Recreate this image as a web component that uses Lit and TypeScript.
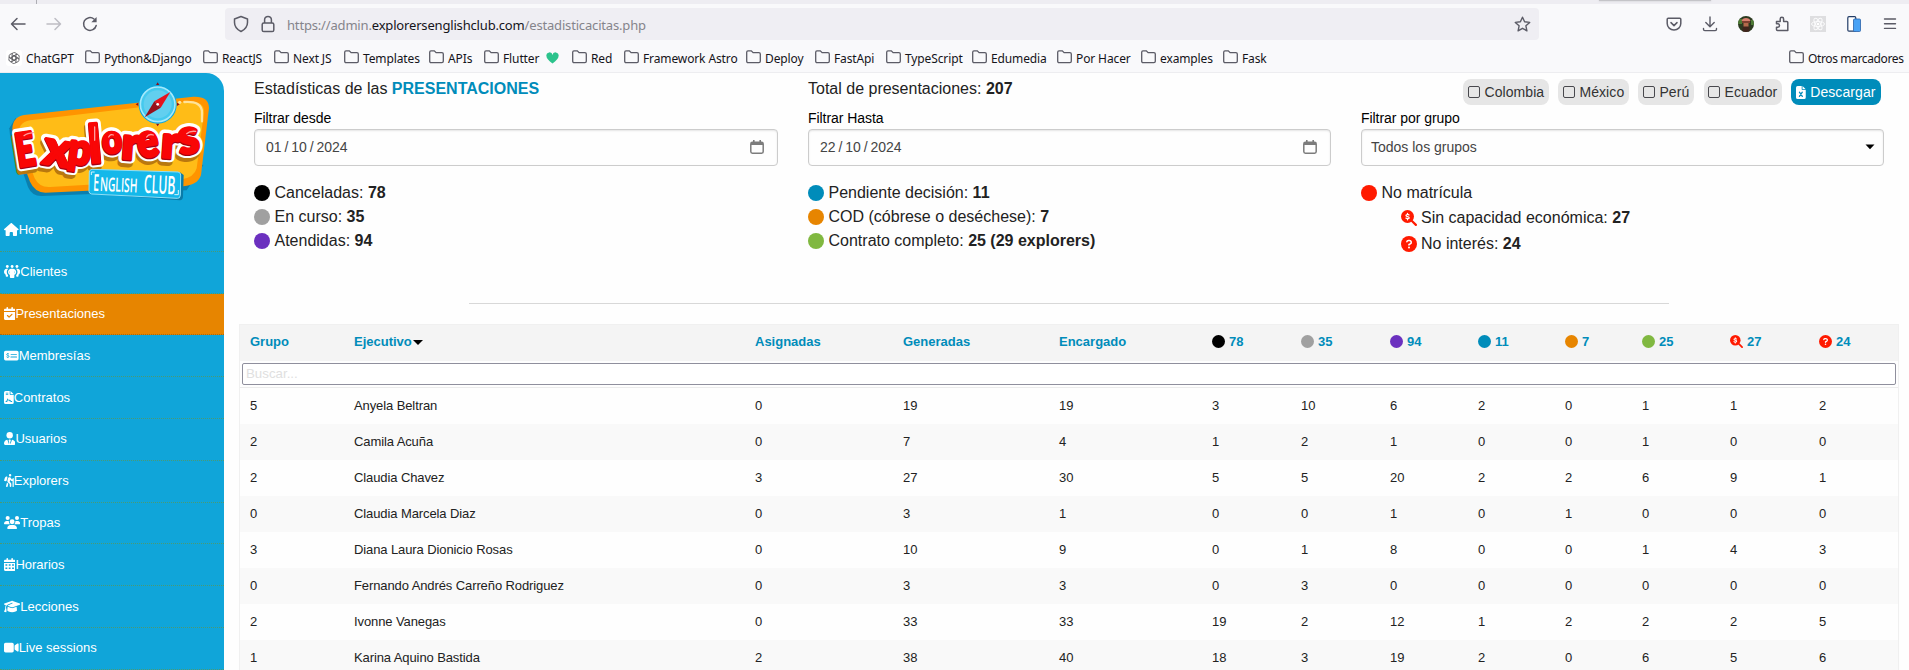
import { LitElement, html, svg, css } from "lit";
import { customElement } from "lit/decorators.js";

const P = (d: string) => svg`<path fill="currentColor" d=${d}/>`;

const ICONS: Record<string, { w: number; body: unknown }> = {
  home: { w: 576, body: P("M575.8 255.5c0 18-15 32.1-32 32.1h-32l.7 160.2c0 2.7-.2 5.4-.5 8.1V472c0 22.1-17.9 40-40 40H456c-1.1 0-2.2 0-3.3-.1c-1.4 .1-2.8 .1-4.2 .1H416 392c-22.1 0-40-17.9-40-40V448 384c0-17.7-14.3-32-32-32H256c-17.7 0-32 14.3-32 32v64 24c0 22.1-17.9 40-40 40H160 128.1c-1.5 0-3-.1-4.5-.2c-1.2 .1-2.4 .2-3.6 .2H104c-22.1 0-40-17.9-40-40V360c0-.9 0-1.9 .1-2.8V287.6H32c-18 0-32-14-32-32.1c0-9 3-17 10-24L266.4 8c7-7 15-8 22-8s15 2 21 7L564.8 231.5c8 7 12 15 11 24z") },
  clients: { w: 640, body: svg`<g fill="currentColor"><circle cx="130" cy="58" r="56"/><circle cx="320" cy="58" r="56"/><circle cx="510" cy="58" r="56"/><path d="M100 144h66c-34 34-56 78-56 130 0 46 20 90 50 120v40c0 18-12 30-28 30h-36c-16 0-28-12-28-30v-48C30 360 0 320 0 274c0-72 36-130 100-130zM540 144h-66c34 34 56 78 56 130 0 46-20 90-50 120v40c0 18 12 30 28 30h36c16 0 28-12 28-30v-48c38-26 68-66 68-112 0-72-36-130-100-130z"/><path d="M290 144h60c74 0 130 58 130 130 0 56-34 96-72 114v92c0 18-14 32-32 32H264c-18 0-32-14-32-32v-92c-38-18-72-58-72-114 0-72 56-130 130-130zM232 330v-96c-20 28-20 68 0 96zm176 0c20-28 20-68 0-96z"/></g>` },
  calcheck: { w: 448, body: P("M128 0c17.7 0 32 14.3 32 32V64H288V32c0-17.7 14.3-32 32-32s32 14.3 32 32V64h48c26.5 0 48 21.5 48 48v48H0V112C0 85.5 21.5 64 48 64H96V32c0-17.7 14.3-32 32-32zM0 192H448V464c0 26.5-21.5 48-48 48H48c-26.5 0-48-21.5-48-48V192zM329 305c9.4-9.4 9.4-24.6 0-33.9s-24.6-9.4-33.9 0l-95 95-47-47c-9.4-9.4-24.6-9.4-33.9 0s-9.4 24.6 0 33.9l64 64c9.4 9.4 24.6 9.4 33.9 0L329 305z") },
  money: { w: 576, body: svg`<path fill="currentColor" fill-rule="evenodd" d="M64 64H512a64 64 0 0 1 64 64V384a64 64 0 0 1-64 64H64a64 64 0 0 1-64-64V128a64 64 0 0 1 64-64zM272 192a16 16 0 0 0 0 32H496a16 16 0 0 0 0-32zM272 296a16 16 0 0 0 0 40H496a16 16 0 0 0 0-40z"/><path fill="none" stroke="#10a5d9" stroke-width="34" d="M196 204c-24-22-92-22-92 16 0 44 94 22 94 70 0 38-68 42-98 14M150 160v38m0 122v36"/>` },
  contract: { w: 384, body: svg`<path fill="currentColor" fill-rule="evenodd" d="M64 0H224V128a32 32 0 0 0 32 32H384V448a64 64 0 0 1-64 64H64a64 64 0 0 1-64-64V64A64 64 0 0 1 64 0zM256 0V128H384zM72 64v30h96V64zm0 64v30h96v-30zM64 430h60l34-88 42 72 30-34 34 50h56v-34h-40l-48-62-40 34-50-84-48 112H64z"/>` },
  usertie: { w: 448, body: svg`<g fill="currentColor"><circle cx="224" cy="128" r="126"/><path d="M132 304 196 480 206 420 180 324 200 292h48l20 32-26 96 10 60 64-176c76 6 132 70 132 146 0 34-26 62-60 62H60c-34 0-60-28-60-62 0-76 56-140 132-146z"/></g>` },
  hiking: { w: 384, body: P("M192 48a48 48 0 1 1 96 0 48 48 0 1 1-96 0zm51.3 182.7L224.2 307l49.7 49.7c9 9 14.1 21.2 14.1 33.9V480c0 17.7-14.3 32-32 32s-32-14.3-32-32V397.3l-73.9-73.9c-15.8-15.8-22.2-38.6-16.9-60.3l20.4-84c8.3-34.1 42.7-54.9 76.7-46.4c19 4.8 35.6 16.4 46.4 32.7L305.1 208H336V184c0-13.3 10.7-24 24-24s24 10.7 24 24v55.8V488c0 13.3-10.7 24-24 24s-24-10.7-24-24V272H296.6c-16 0-31-8-39.9-21.4l-13.3-20zM81.1 471.9L117.3 334c3 4.2 6.4 8.2 10.1 11.9l41.9 41.9L142.9 488.1c-4.5 17.1-22 27.3-39.1 22.8s-27.3-22-22.8-39.1zm55.5-346L101.4 266.5c-3 12.1-14.9 19.9-27.2 17.9l-47.9-8c-14-2.3-22.9-16.3-19.2-30L31.9 155c9.5-34.8 41.1-59 77.2-59h4.2c15.6 0 27.1 14.7 23.3 29.8z") },
  users: { w: 640, body: svg`<g fill="currentColor"><circle cx="144" cy="80" r="80"/><circle cx="512" cy="80" r="80"/><circle cx="320" cy="224" r="96"/><path d="M0 298c0-58 48-106 106-106h43c16 0 31 4 45 10a128 128 0 0 0 41 118H21c-11 0-21-10-21-22zM640 298c0-58-48-106-106-106h-43c-16 0-31 4-45 10a128 128 0 0 1-41 118h214c11 0 21-10 21-22zM128 486c0-74 60-134 133-134h118c73 0 133 60 133 134 0 14-12 26-27 26H155c-15 0-27-12-27-26z"/></g>` },
  caldays: { w: 448, body: svg`<path fill="currentColor" fill-rule="evenodd" d="M128 0c18 0 32 14 32 32V64H288V32c0-18 14-32 32-32s32 14 32 32V64h48c26 0 48 22 48 48v48H0V112C0 86 22 64 48 64H96V32c0-18 14-32 32-32zM0 192H448V464c0 26-22 48-48 48H48c-26 0-48-22-48-48zM56 244v62h74v-62zm131 0v62h74v-62zm131 0v62h74v-62zM56 376v62h74v-62zm131 0v62h74v-62zm131 0v62h74v-62z"/>` },
  cap: { w: 640, body: P("M320 32c-8.1 0-16.1 1.4-23.7 4.1L15.8 137.4C6.3 140.9 0 149.9 0 160s6.3 19.1 15.8 22.6l57.9 20.9C57.3 229.3 48 259.8 48 291.9v28.1c0 28.4-10.8 57.7-22.3 80.8c-6.5 13-13.9 25.8-22.5 37.6C0 442.7-.9 448.3 .9 453.4s6 8.9 11.2 10.2l64 16c4.2 1.1 8.7 .3 12.4-2s6.3-6.1 7.1-10.4c8.6-42.8 4.3-81.2-2.1-108.7C90.3 344.3 86 329.8 80 316.5V291.9c0-30.2 10.2-58.7 27.9-81.5c12.9-15.5 29.6-28 49.2-35.7l157-61.7c8.2-3.2 17.5 .8 20.7 9s-.8 17.5-9 20.7l-157 61.7c-12.4 4.9-23.3 12.4-32.2 21.6l159.6 57.6c7.6 2.7 15.6 4.1 23.7 4.1s16.1-1.4 23.7-4.1L624.2 182.6c9.5-3.4 15.8-12.5 15.8-22.6s-6.3-19.1-15.8-22.6L343.7 36.1C336.1 33.4 328.1 32 320 32zM128 408c0 35.3 86 72 192 72s192-36.7 192-72L496.7 262.6 354.5 314c-11.1 4-22.8 6-34.5 6s-23.5-2-34.5-6L143.3 262.6 128 408z") },
  video: { w: 576, body: P("M0 128C0 92.7 28.7 64 64 64H320c35.3 0 64 28.7 64 64V384c0 35.3-28.7 64-64 64H64c-35.3 0-64-28.7-64-64V128zM559.1 99.8c10.4 5.6 16.9 16.4 16.9 28.2V384c0 11.8-6.5 22.6-16.9 28.2s-23 5-32.9-1.6l-96-64L416 337.1V174.9l14.2-9.5 96-64c9.8-6.5 22.4-7.2 32.9-1.6z") },
  circle: { w: 512, body: svg`<circle cx="256" cy="256" r="256" fill="currentColor"/>` },
  searchdollar: { w: 512, body: svg`<circle cx="208" cy="208" r="208" fill="currentColor"/><path d="M350 350 476 476" stroke="currentColor" stroke-width="70" stroke-linecap="round"/><path fill="none" stroke="#fff" stroke-width="40" stroke-linecap="round" d="M258 158c-26-20-100-22-100 16 0 46 104 24 104 70 0 40-76 40-106 14M208 104v34m0 142v34"/>` },
  question: { w: 512, body: svg`<circle cx="256" cy="256" r="256" fill="currentColor"/><path fill="none" stroke="#fff" stroke-width="50" stroke-linecap="round" d="M188 180c6-24 24-34 50-34h34c62 0 78 76 26 104l-42 24v14"/><circle cx="256" cy="366" r="32" fill="#fff"/>` },
  excel: { w: 384, body: svg`<path fill="currentColor" fill-rule="evenodd" d="M64 0H224V128a32 32 0 0 0 32 32H384V448a64 64 0 0 1-64 64H64a64 64 0 0 1-64-64V64A64 64 0 0 1 64 0zM256 0V128H384z"/><path stroke="#008cba" stroke-width="50" stroke-linecap="round" d="m135 245 114 166M249 245 135 411"/>` },
};

const glyph = (name: string, size: number, cls = "") => {
  const i = ICONS[name];
  return html`<svg class="glyph ${cls}" width=${(i.w / 512) * size} height=${size} viewBox="0 0 ${i.w} 512">${i.body}</svg>`;
};

const folder = html`<svg class="fold" width="15" height="14" viewBox="0 0 15 14" fill="none" stroke="#5b5b66" stroke-width="1.3"><path d="M.7 11.3V2.2C.7 1.3 1.2.8 2 .8h3.3l1.8 1.9h5.8c.9 0 1.4.5 1.4 1.3v7.3c0 .9-.5 1.4-1.4 1.4H2c-.8 0-1.3-.5-1.3-1.4z"/></svg>`;

@customElement("browser-bar")
class BrowserBar extends LitElement {
  static styles = css`
    :host { display: block; height: 73px; background: #f9f9fb; font-family: "Noto Sans", sans-serif; color: #15141a; box-sizing: border-box; border-bottom: 1px solid #ededf0; overflow: hidden; }
    .strip { height: 4px; background: #eeedf2; display: flex; }
    .strip .sep { width: 1px; height: 4px; margin-left: 36px; background: #aeaeb4; }
    .strip .pop { width: 112px; height: 1px; margin-left: 1562px; background: #c4c4c8; box-shadow: 0 0 2px #b8b8bd; }
    .tools { height: 40px; display: flex; align-items: center; }
    .tools svg { flex: none; display: block; }
    .nav { width: 225px; display: flex; gap: 20px; padding-left: 10px; box-sizing: border-box; }
    .url { width: 1314px; height: 32px; border-radius: 4px; background: #efeef3; display: flex; align-items: center; padding: 0 8px 0 8px; box-sizing: border-box; font-size: 13px; color: #85848b; }
    .url .addr { flex: 1; margin-left: 12px; padding-top: 1px; letter-spacing: -0.17px; white-space: nowrap; }
    .addr b { font-weight: 400; color: #15141a; }
    .url svg + svg { margin-left: 12px; }
    .ext { display: flex; gap: 20px; margin-left: 127px; align-items: center; }
    .marks { display: flex; height: 28px; align-items: center; font-size: 12px; letter-spacing: -0.12px; white-space: nowrap; padding-left: 6px; }
    .mark { display: flex; align-items: center; flex: none; }
    .mark svg { flex: none; }
    .fold { margin-right: 4px; margin-top: -2px; }
    .last { margin-left: auto; width: 120.500px; letter-spacing: -0.38px; }
    .last .fold { margin-right: 4.500px; }
    .gpt { margin-right: 4px; }
    .heart { margin-left: 7px; }
  `;
  items: [string, number][] = [
    ["Python&Django", 118], ["ReactJS", 71], ["Next JS", 70], ["Templates", 85], ["APIs", 55],
    ["Flutter", 88], ["Red", 52], ["Framework Astro", 122], ["Deploy", 69], ["FastApi", 71],
    ["TypeScript", 86], ["Edumedia", 85], ["Por Hacer", 84], ["examples", 82], ["Fask", 50],
  ];
  render() {
    const s = "#5b5b66";
    return html`
      <div class="strip"><div class="sep"></div><div class="pop"></div></div>
      <div class="tools">
        <div class="nav">
          <svg width="16" height="16" viewBox="0 0 16 16" fill="none" stroke=${s} stroke-width="1.5" stroke-linecap="round" stroke-linejoin="round"><path d="M15 8H1.5M7 2.5 1.5 8 7 13.5"/></svg>
          <svg width="16" height="16" viewBox="0 0 16 16" fill="none" stroke="#bebdc4" stroke-width="1.5" stroke-linecap="round" stroke-linejoin="round"><path d="M1 8h13.5M9 2.5 14.5 8 9 13.5"/></svg>
          <svg width="16" height="16" viewBox="0 0 16 16" fill="none" stroke=${s} stroke-width="1.5" stroke-linecap="round"><path d="M14.2 9.5A6.4 6.4 0 1 1 12 3"/><path d="M14.6 1v5.3H9.3z" fill=${s} stroke="none"/></svg>
        </div>
        <div class="url">
          <svg width="16" height="18" viewBox="0 0 16 18" fill="none" stroke=${s} stroke-width="1.5" stroke-linejoin="round"><path d="M8 1.5 14.5 4v3.5c0 4-2.5 7-6.5 9-4-2-6.5-5-6.5-9V4z"/></svg>
          <svg width="14" height="18" viewBox="0 0 14 18" fill="none" stroke=${s} stroke-width="1.5"><rect x="1.2" y="8" width="11.6" height="8.5" rx="1.6"/><path d="M3.6 8V4.8a3.4 3.4 0 0 1 6.8 0V8"/></svg>
          <span class="addr">https://admin.<b>explorersenglishclub.com</b>/estadisticacitas.php</span>
          <svg width="17" height="17" viewBox="0 0 17 17" fill="none" stroke=${s} stroke-width="1.4" stroke-linejoin="round"><path d="m8.5 1.2 2.1 4.6 5.1.6-3.8 3.4 1 5-4.4-2.5-4.4 2.5 1-5L1.300 6.400l5.100-.6z"/></svg>
        </div>
        <div class="ext">
          <svg width="16" height="16" viewBox="0 0 16 16" fill="none" stroke=${s} stroke-width="1.5" stroke-linecap="round" stroke-linejoin="round"><path d="M2.200 2.200h11.600c.6 0 1 .4 1 1v4.300a6.800 6.500 0 0 1-13.600 0V3.200c0-.6.4-1 1-1zM5 6.600l3 3 3-3"/></svg>
          <svg width="16" height="16" viewBox="0 0 16 16" fill="none" stroke=${s} stroke-width="1.4" stroke-linecap="round" stroke-linejoin="round"><path d="M8 1v9.500M3.800 6.500 8 10.700l4.200-4.200M1.500 12.500v.8c0 .8.5 1.300 1.300 1.300h10.400c.8 0 1.300-.5 1.300-1.300v-.8"/></svg>
          <svg width="16" height="16" viewBox="0 0 16 16"><clipPath id="av"><circle cx="8" cy="8" r="8"/></clipPath><g clip-path="url(#av)"><path fill="#2c3a20" d="M0 0h16v16H0z"/><path fill="#4d7a35" d="M0 3h4v5H0zM13 4h3v5h-3z"/><path fill="#d9806f" d="M3.500 5C4 1 12 1 12.500 5z"/><path fill="#7d3f2f" d="M4 5h8v2H4z"/><path fill="#b46a4c" d="M5.500 7h5v4h-5z"/><path fill="#40241c" d="M4.500 10.500h7V16h-7z"/></g></svg>
          <svg width="16" height="16" viewBox="0 0 16 16" fill="none" stroke=${s} stroke-width="1.500" stroke-linejoin="round"><path d="M2.500 5.500h3.700V3a1.700 1.700 0 0 1 3.400 0v2.500h3.200c.6 0 1 .4 1 1v8H3.500c-.6 0-1-.4-1-1v-2.300h1.300a1.700 1.700 0 0 0 0-3.400H2.500z"/></svg>
          <svg width="16" height="16" viewBox="0 0 16 16"><path fill="#dedee0" d="M0 0h16v16H0z"/><g fill="none" stroke="#fbfbfc"><ellipse cx="8" cy="8" rx="6.500" ry="2.500"/><ellipse cx="8" cy="8" rx="6.500" ry="2.500" transform="rotate(60 8 8)"/><ellipse cx="8" cy="8" rx="6.500" ry="2.500" transform="rotate(120 8 8)"/></g><circle cx="8" cy="8" r="1.300" fill="#fff"/></svg>
          <svg width="16" height="16" viewBox="0 0 16 16"><rect x="1.800" y=".7" width="8" height="14.500" rx="1.200" fill="#fff" stroke="#223c66" stroke-width="1.200"/><rect x="7.500" y="3" width="7" height="12.500" rx="1" fill="#4aa3f5" stroke="#2a62a8" stroke-width=".8"/></svg>
          <svg width="16" height="16" viewBox="0 0 16 16" stroke=${s} stroke-width="1.400" stroke-linecap="round"><path d="M2.500 3h11M2.500 7.700h11M2.500 12.400h11"/></svg>
        </div>
      </div>
      <div class="marks">
        <div class="mark" style="width:79px"><svg class="gpt" width="16" height="16" viewBox="0 0 16 16"><rect width="16" height="16" rx="3" fill="#fff"/><g fill="none" stroke="#5a5a5e" stroke-width="1" transform="translate(1.400 1.400) scale(.83)">${[0, 60, 120, 180, 240, 300].map((a) => svg`<path transform="rotate(${a} 8 8)" d="M8 5.200 5.600 6.600V3.800A2.700 2.700 0 0 1 10.400 2.400L12.300 3.600M5.600 4l4.800 2.700"/>`)}</g></svg>ChatGPT</div>
        ${this.items.map(([t, w]) => html`<div class="mark" style="width:${w}px">${folder}${t}${t === "Flutter" ? html`<svg class="heart" width="13" height="12" viewBox="0 0 14 12"><path d="M7 11.800C3 9.200.4 6.500.4 3.700a3.300 3.300 0 0 1 6.600-.9 3.300 3.300 0 0 1 6.600.9C13.600 6.500 11 9.200 7 11.800z" fill="#2cc38c"/></svg>` : ""}</div>`)}
        <div class="mark last">${folder}Otros marcadores</div>
      </div>`;
  }
}

@customElement("side-menu")
class SideMenu extends LitElement {
  static styles = css`
    :host { display: block; width: 224px; height: 597px; background: #10a5d9; border-top-right-radius: 18px; overflow: hidden; color: #fff; font: 13px "Liberation Sans", Arial, sans-serif; }
    .logo { display: block; height: 137px; }
    .item { height: 41.8px; box-sizing: border-box; padding-bottom: 1px; border-bottom: 1px dotted #4a9a72; display: flex; align-items: center; padding-left: 4px; }
    .glyph { display: block; flex: none; }
    .active { background: #e78500; border-bottom-color: #a46a12; }
    .brand { font-family: Lato, "Open Sans", sans-serif; font-weight: 900; }
    .club { font-family: "Open Sans", sans-serif; font-weight: 600; }
  `;
  items = [["home", "Home"], ["clients", "Clientes"], ["calcheck", "Presentaciones"], ["money", "Membresías"], ["contract", "Contratos"], ["usertie", "Usuarios"], ["hiking", "Explorers"], ["users", "Tropas"], ["caldays", "Horarios"], ["cap", "Lecciones"], ["video", "Live sessions"]];
  word() {
    // letter, x, baseline, rotation, font size, horizontal scale
    const L: [string, number, number, number, number, number][] = [
      ["E", 55, 306, -9, 138, 0.72], ["x", 124, 294, 10, 146, 1.08], ["p", 200, 292, 8, 130, 0.92], ["l", 270, 294, -5, 158, 0.95], ["o", 308, 265, -4, 118, 0.88],
      ["r", 362, 280, 4, 134, 1.08], ["e", 418, 279, -9, 142, 0.84], ["r", 481, 276, 4, 134, 1.08], ["s", 540, 268, -8, 144, 0.98],
    ];
    return L.map(([c, x, y, r, f, s]) => svg`<text class="brand" font-size=${f} transform="translate(${x} ${y}) rotate(${r}) scale(${s} 1)">${c}</text>`);
  }
  render() {
    return html`
      <svg class="logo" width="224" height="137" viewBox="0 24 672 411">
        <path d="M46 160 28 190 30 210 84 366Q96 394 126 393L560 376 610 300z" fill="#0b7fae"/>
        <path d="M72 150 580 95Q626 93 627 128L603 330Q594 360 550 364L136 383Q104 382 90 350L37 205Q33 156 72 150z" fill="#ff9400"/>
        <path d="M90 166 560 110Q613 106 612 142L590 310Q582 338 545 343L150 366Q118 368 104 340L56 215Q52 172 90 166z" fill="#ffbc17"/>
        <path d="M553 111c34-2 54 6 53 34v24" fill="none" stroke="#ffe39a" stroke-width="7" stroke-linecap="round"/><circle cx="539" cy="112" r="5" fill="#ffe39a"/>
        <g fill="#b9780e" stroke="#b9780e" stroke-width="24" stroke-linejoin="round" transform="translate(-5 13)">${this.word()}</g>
        <g fill="#fff" stroke="#fff" stroke-width="28" stroke-linejoin="round">${this.word()}</g>
        <g fill="#a50012" stroke="#a50012" stroke-width="10" stroke-linejoin="round" transform="translate(0 3)">${this.word()}</g>
        <g fill="#f90606" stroke="#f90606" stroke-width="8" stroke-linejoin="round">${this.word()}</g>
        <path d="M72 212c8-6 18-8 28-9M284 186v40M326 216c4-8 10-8 14-6M440 216c5-8 12-9 20-6M560 206c8-8 18-8 27-7" fill="none" stroke="#ff9c9c" stroke-width="4" stroke-linecap="round"/>
        <g fill="#8f0d1d"><path d="M473 52l5 8h-10zM473 184l5-8h-10zM407 118l8-5v10zM539 118l-8-5v10z"/></g>
        <circle cx="473" cy="119" r="57" fill="#0aa6e0"/><circle cx="473" cy="118" r="52" fill="#45c9ee" stroke="#a4e9fb" stroke-width="5"/><circle cx="473" cy="118" r="42" fill="#62cfef"/>
        <path d="M511 81 482 128 463 109z" fill="#e5121d"/><path d="M434 157 463 109 482 128z" fill="#98101c"/><circle cx="473" cy="118" r="4" fill="#fff"/>
        <path d="M274 386 540 406Q548 405 549 396L551 330 540 322z" fill="#0a7ba8"/>
        <path d="M276 313 534 321Q542 322 542 330L541 391Q540 401 532 400L275 387Q267 386 267 379L268 321Q269 313 276 313z" fill="#14b8ea" stroke="#8fe0f8" stroke-width="3"/>
        <path d="M274 330v-9h10M535 375v14h-12" fill="none" stroke="#d9f5fd" stroke-width="3"/>
        <g fill="#fff" class="club" transform="rotate(2.500 280 376)"><text font-size="70" transform="translate(279 377) scale(.44 1)">E</text><text font-size="58" transform="translate(299 377) scale(.53 1)">NGLISH</text><text font-size="76" transform="translate(431 377) scale(.48 1)">CLUB</text></g>
      </svg>
      ${this.items.map(([i, t]) => html`<div class="item ${i === "calcheck" ? "active" : ""}">${glyph(i, 13)}<span>${t}</span></div>`)}`;
  }
}

@customElement("stats-panel")
class StatsPanel extends LitElement {
  static styles = css`
    :host { display: grid; grid-template-columns: 524px 523px 523px; column-gap: 30px; padding: 0 15px; height: 230px; box-sizing: border-box; font: 16px/24px "Liberation Sans", Arial, sans-serif; color: #222; }
    .head { height: 36px; padding-top: 4px; box-sizing: border-box; white-space: nowrap; }
    .brand { color: #008cba; }
    .label { font-size: 14px; line-height: 20px; height: 20px; padding-top: 0; color: #000; margin-top: -1px; letter-spacing: -0.05px; }
    .field { height: 37px; margin-top: 1px; border: 1px solid #ccc; border-radius: 4px; box-shadow: inset 0 1px 2px rgba(10,10,10,.1); box-sizing: border-box; display: flex; align-items: center; justify-content: space-between; padding: 0 13px 1px 11px; font-size: 14px; color: #444; word-spacing: -1px; }
    .select { padding: 0 8px 1px 9px; word-spacing: 0; }
    .field svg { display: block; }
    .list { padding-top: 15px; }
    .row { display: flex; align-items: center; height: 24px; gap: 4.500px; white-space: pre; }
    .sub { margin-left: 39.500px; height: 26px; }
    .glyph { flex: none; }
    .pills { display: flex; justify-content: flex-end; gap: 9.700px; padding: 6px 3.500px 0 0; height: 36px; box-sizing: border-box; }
    .pill { height: 26px; border-radius: 8px; background: #e6e6e6; color: #333; font-size: 14px; line-height: 25px; display: flex; align-items: center; padding: 0 4.500px; gap: 4.500px; letter-spacing: .08px; }
    .dl { background: #008cba; color: #fff; gap: 4px; padding: 0 5px; }
    .box { width: 12px; height: 12px; border: 1.500px solid #48484d; border-radius: 2px; box-sizing: border-box; }
  `;
  row(color: string, text: string, n: string, icon = "circle", cls = "") {
    return html`<div class="row ${cls}"><span style="color:${color};display:flex">${glyph(icon, 16)}</span><span>${text}<b>${n}</b></span></div>`;
  }
  date(v: string) {
    return html`<div class="field"><span>${v}</span><svg width="14" height="14" viewBox="0 0 14 14"><path d="M1 2.500h12V5H1zM3 0h1.600v3H3zM9.400 0H11v3H9.400z" fill="#7c7c7c"/><rect x=".8" y="2.300" width="12.400" height="10.900" rx="1.600" fill="none" stroke="#7c7c7c" stroke-width="1.500"/></svg></div>`;
  }
  render() {
    return html`
      <div><div class="head">Estadísticas de las <b class="brand">PRESENTACIONES</b></div><div class="label">Filtrar desde</div>${this.date("01 / 10 / 2024")}
        <div class="list">${this.row("#000", "Canceladas: ", "78")}${this.row("#a0a0a0", "En curso: ", "35")}${this.row("#6b30bf", "Atendidas: ", "94")}</div></div>
      <div><div class="head">Total de presentaciones: <b>207</b></div><div class="label">Filtrar Hasta</div>${this.date("22 / 10 / 2024")}
        <div class="list">${this.row("#008cba", "Pendiente decisión: ", "11")}${this.row("#e78500", "COD (cóbrese o deséchese): ", "7")}${this.row("#80b840", "Contrato completo: ", "25 (29 explorers)")}</div></div>
      <div><div class="pills">${["Colombia", "México", "Perú", "Ecuador"].map((c) => html`<span class="pill"><i class="box"></i>${c}</span>`)}<span class="pill dl">${glyph("excel", 13)}Descargar</span></div>
        <div class="label">Filtrar por grupo</div><div class="field select"><span>Todos los grupos</span><svg width="10" height="6" viewBox="0 0 10 6"><path d="M.5.5h9L5 5.300z"/></svg></div>
        <div class="list">${this.row("#ff1a00", "No matrícula", "")}${this.row("#ff1a00", "Sin capacidad económica: ", "27", "searchdollar", "sub")}${this.row("#ff1a00", "No interés: ", "24", "question", "sub")}</div></div>`;
  }
}

@customElement("stats-table")
class StatsTable extends LitElement {
  static styles = css`
    :host { display: block; box-sizing: border-box; width: 1660px; border: 1px solid #f0f0f0; border-bottom: 0; font: 13px "Liberation Sans", Arial, sans-serif; color: #222; }
    .r { display: grid; grid-template-columns: 104px 401px 148px 156px 153px 89px 89px 88px 87px 77px 88px 89px auto; height: 36px; box-sizing: border-box; align-items: center; padding: 0 0 2px 10px; background: #fefefe; white-space: nowrap; letter-spacing: -0.1px; }
    .r:nth-child(even) { background: #f9f9f9; }
    .h { background: #f4f4f4; color: #008cba; font-weight: 700; letter-spacing: 0; padding-bottom: 3px; }
    .c { display: flex; align-items: center; gap: 4px; }
    .tri { width: 0; border: 5px solid transparent; border-top-color: #000; border-bottom: 0; margin-left: -3px; margin-top: 1px; }
    .search { padding: 2px; height: 27px; box-sizing: border-box; border-bottom: 1px solid #ececec; background: #fefefe; }
    .inp { height: 22px; border: 1px solid #8f8f9d; border-radius: 2px; background: #fff; color: #e0e0e0; box-sizing: border-box; padding: 0 3px; line-height: 20px; font-size: 13.300px; }
  `;
  rows = [
    [5, "Anyela Beltran", 0, 19, 19, 3, 10, 6, 2, 0, 1, 1, 2],
    [2, "Camila Acuña", 0, 7, 4, 1, 2, 1, 0, 0, 1, 0, 0],
    [2, "Claudia Chavez", 3, 27, 30, 5, 5, 20, 2, 2, 6, 9, 1],
    [0, "Claudia Marcela Diaz", 0, 3, 1, 0, 0, 1, 0, 1, 0, 0, 0],
    [3, "Diana Laura Dionicio Rosas", 0, 10, 9, 0, 1, 8, 0, 0, 1, 4, 3],
    [0, "Fernando Andrés Carreño Rodriguez", 0, 3, 3, 0, 3, 0, 0, 0, 0, 0, 0],
    [2, "Ivonne Vanegas", 0, 33, 33, 19, 2, 12, 1, 2, 2, 2, 5],
    [1, "Karina Aquino Bastida", 2, 38, 40, 18, 3, 19, 2, 0, 6, 5, 6],
  ];
  heads: [string, string, string][] = [["#000", "78", "circle"], ["#a0a0a0", "35", "circle"], ["#6b30bf", "94", "circle"], ["#008cba", "11", "circle"], ["#e78500", "7", "circle"], ["#80b840", "25", "circle"], ["#ff1a00", "27", "searchdollar"], ["#ff1a00", "24", "question"]];
  render() {
    return html`
      <div class="r h"><span>Grupo</span><span class="c">Ejecutivo<i class="tri"></i></span><span>Asignadas</span><span>Generadas</span><span>Encargado</span>
        ${this.heads.map(([c, n, i]) => html`<span class="c"><span style="color:${c};display:flex">${glyph(i, 13)}</span>${n}</span>`)}</div>
      <div class="search"><div class="inp">Buscar...</div></div>
      <div>${this.rows.map((r) => html`<div class="r">${r.map((v) => html`<span>${v}</span>`)}</div>`)}</div>`;
  }
}

@customElement("app-root")
class AppRoot extends LitElement {
  static styles = css`
    :host { display: block; width: 1909px; height: 670px; overflow: hidden; background: #fefefe; }
    .page { display: flex; height: 597px; overflow: hidden; }
    .main { width: 1660px; margin-left: 15px; flex: none; }
    .rule { width: 1200px; height: 1px; background: #d8d8d8; margin: 0 auto 20px; }
  `;
  render() {
    return html`<browser-bar></browser-bar><div class="page"><side-menu></side-menu><div class="main"><stats-panel></stats-panel><div class="rule"></div><stats-table></stats-table></div></div>`;
  }
}
